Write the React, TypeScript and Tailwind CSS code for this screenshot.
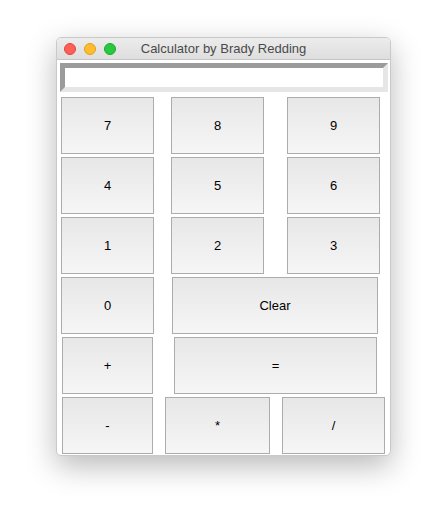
import React from "react";

type Btn = { label: string; w: string; ml: string };

const rows: Btn[][] = [
  [
    { label: "7", w: "w-[93px]", ml: "ml-[4px]" },
    { label: "8", w: "w-[93px]", ml: "ml-[17px]" },
    { label: "9", w: "w-[93px]", ml: "ml-[23px]" },
  ],
  [
    { label: "4", w: "w-[93px]", ml: "ml-[4px]" },
    { label: "5", w: "w-[93px]", ml: "ml-[17px]" },
    { label: "6", w: "w-[93px]", ml: "ml-[23px]" },
  ],
  [
    { label: "1", w: "w-[93px]", ml: "ml-[4px]" },
    { label: "2", w: "w-[93px]", ml: "ml-[17px]" },
    { label: "3", w: "w-[93px]", ml: "ml-[23px]" },
  ],
  [
    { label: "0", w: "w-[93px]", ml: "ml-[4px]" },
    { label: "Clear", w: "w-[206px]", ml: "ml-[18px]" },
  ],
  [
    { label: "+", w: "w-[91px]", ml: "ml-[5px]" },
    { label: "=", w: "w-[203px]", ml: "ml-[21px]" },
  ],
  [
    { label: "-", w: "w-[91px]", ml: "ml-[5px]" },
    { label: "*", w: "w-[105px]", ml: "ml-[12px]" },
    { label: "/", w: "w-[103px]", ml: "ml-[12px]" },
  ],
];

const App = () => {
  return (
    <div className="w-[447px] h-[530px] bg-white pt-[37px] pl-[56px] font-['Liberation_Sans',Arial,sans-serif]">
      <div className="w-[335px] h-[419px] rounded-[5px] bg-white border border-[#c9c9c9] shadow-[0_10px_30px_rgba(0,0,0,0.28)] overflow-hidden flex flex-col">
        {/* title bar */}
        <div className="relative h-[22px] shrink-0 bg-gradient-to-b from-[#ececec] to-[#dedede] border-b border-[#c6c6c6] flex items-center justify-center">
          <div className="absolute left-[7px] top-[5px] flex gap-[8px]">
            <span className="w-[12px] h-[12px] rounded-full bg-[#fe5f57] border border-[#e2463f]" />
            <span className="w-[12px] h-[12px] rounded-full bg-[#febc2e] border border-[#e1a116]" />
            <span className="w-[12px] h-[12px] rounded-full bg-[#28c840] border border-[#1aab29]" />
          </div>
          <span className="text-[13px] text-[#4a4a4a]">Calculator by Brady Redding</span>
        </div>

        {/* display */}
        <div className="mt-[3px] ml-[3px] w-[328px] h-[29px] bg-white border-[5px] border-t-[#9b9b9b] border-l-[#9b9b9b] border-b-[#e6e6e6] border-r-[#e6e6e6]" />

        {/* keys */}
        <div className="mt-[5px] flex flex-col gap-[3px]">
          {rows.map((row, i) => (
            <div key={i} className="flex">
              {row.map((b) => (
                <button
                  key={b.label}
                  className={`${b.w} ${b.ml} h-[57px] border border-[#acacac] bg-gradient-to-b from-[#e7e7e7] to-[#f6f6f6] text-[13px] text-black flex items-center justify-center`}
                >
                  {b.label}
                </button>
              ))}
            </div>
          ))}
        </div>
      </div>
    </div>
  );
};

export default App;
